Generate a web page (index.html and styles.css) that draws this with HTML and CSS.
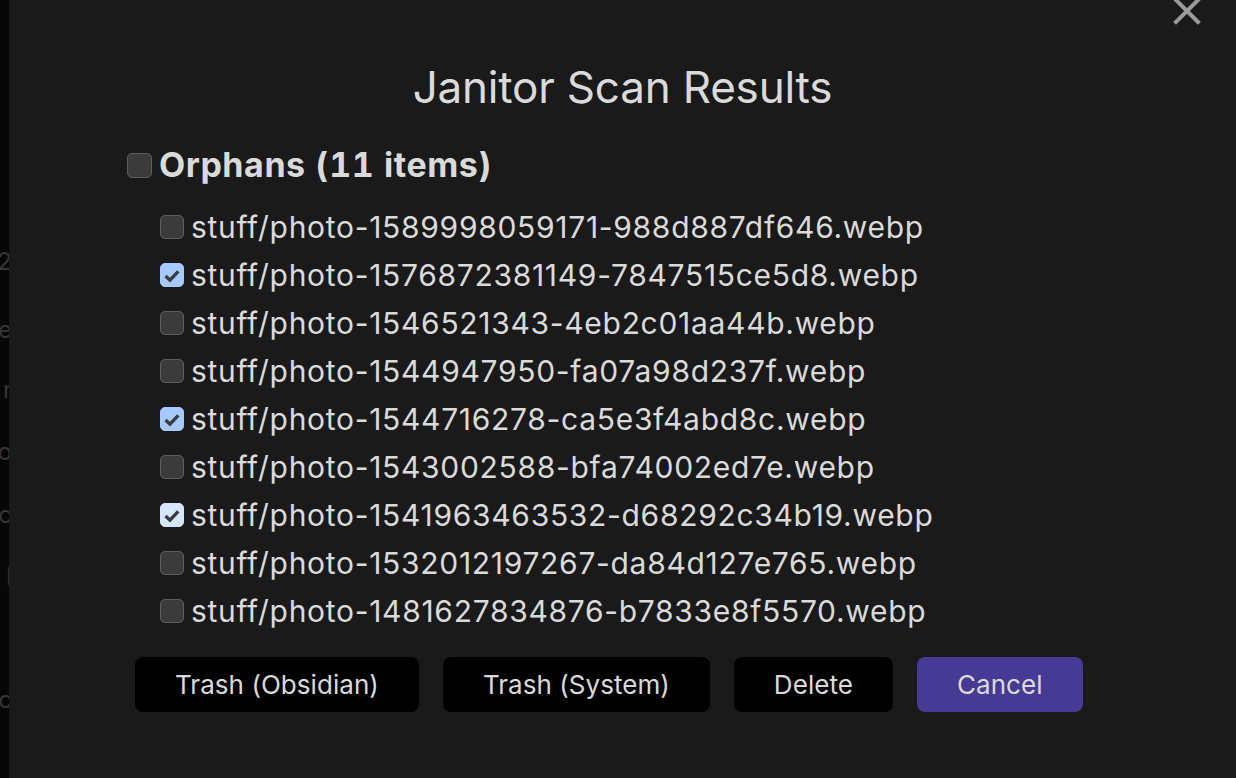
FILE: index.html
```html
<!DOCTYPE html>
<html>
<head>
<meta charset="utf-8">
<link rel="stylesheet" href="styles.css">
</head>
<body>
<div class="app">
  <div class="backdrop">
    <div class="bline l1"><span>2</span></div>
    <div class="bline l2"><span>e</span></div>
    <div class="bline l3"><span>r</span></div>
    <div class="bline l4"><span>o</span></div>
    <div class="bline l5"><span>c</span></div>
    <div class="bline l6"><span>l</span></div>
    <div class="bline l7"><span>c</span></div>
  </div>
  <div class="modal">
    <svg class="close" width="30" height="30" viewBox="0 0 30 30">
      <path d="M4 4 L26 26 M26 4 L4 26" stroke="#9a9a9a" stroke-width="4" stroke-linecap="square"/>
    </svg>
    <h1 class="title">Janitor Scan Results</h1>
    <div class="group">
      <label class="group-head"><span class="cb"></span>Orphans (11 items)</label>
      <ul class="items">
        <li><span class="cb"></span>stuff/photo-1589998059171-988d887df646.webp</li>
        <li><span class="cb on"><svg viewBox="0 0 24 24"><path d="M5 12.5 L9.8 17 L18.8 7.5"/></svg></span>stuff/photo-1576872381149-7847515ce5d8.webp</li>
        <li><span class="cb"></span>stuff/photo-1546521343-4eb2c01aa44b.webp</li>
        <li><span class="cb"></span>stuff/photo-1544947950-fa07a98d237f.webp</li>
        <li><span class="cb on"><svg viewBox="0 0 24 24"><path d="M5 12.5 L9.8 17 L18.8 7.5"/></svg></span>stuff/photo-1544716278-ca5e3f4abd8c.webp</li>
        <li><span class="cb"></span>stuff/photo-1543002588-bfa74002ed7e.webp</li>
        <li><span class="cb on focus"><svg viewBox="0 0 24 24"><path d="M5 12.5 L9.8 17 L18.8 7.5"/></svg></span>stuff/photo-1541963463532-d68292c34b19.webp</li>
        <li><span class="cb"></span>stuff/photo-1532012197267-da84d127e765.webp</li>
        <li><span class="cb"></span>stuff/photo-1481627834876-b7833e8f5570.webp</li>
      </ul>
    </div>
    <div class="buttons">
      <button class="btn b1">Trash (Obsidian)</button>
      <button class="btn b2">Trash (System)</button>
      <button class="btn b3">Delete</button>
      <button class="btn cta">Cancel</button>
    </div>
  </div>
</div>
</body>
</html>
```

FILE: styles.css
```css
html, body {
  margin: 0;
  padding: 0;
  background: #0a0a0a;
  overflow: hidden;
}
.app {
  display: flex;
  width: 1236px;
  height: 778px;
  font-family: Inter, "Liberation Sans", sans-serif;
}
.backdrop {
  width: 9px;
  flex: none;
  background: #070707;
  overflow: hidden;
  display: flex;
  flex-direction: column;
  padding-top: 247px;
}
.bline {
  display: flex;
  justify-content: flex-end;
  width: 8px;
  height: 30px;
  font-size: 24px;
  line-height: 30px;
  color: #363636;
  white-space: nowrap;
}
.bline span { margin-right: -4px; }
.bline.l2 { margin-top: 38px; }
.bline.l3 { margin-top: 30px; }
.bline.l4, .bline.l6 { margin-top: 32px; }
.bline.l5 { margin-top: 33px; }
.bline.l7 { margin-top: 93px; }
.modal {
  flex: 1;
  position: relative;
  background: #1a1a1a;
  display: flex;
  flex-direction: column;
  color: #dadada;
}
.close {
  position: absolute;
  top: -4px;
  left: 1163px;
}
.title {
  margin: 60px 0 0;
  font-size: 44px;
  font-weight: 400;
  line-height: 54px;
  text-align: center;
  color: #dadada;
  letter-spacing: -0.2px;
}
.group {
  margin: 31px 0 0 118px;
}
.group-head {
  display: flex;
  align-items: center;
  gap: 7px;
  height: 40px;
  font-size: 34px;
  font-weight: 700;
  line-height: 40px;
  letter-spacing: 0.55px;
  font-variant-numeric: tabular-nums;
}
.cb {
  flex: none;
  box-sizing: border-box;
  width: 24px;
  height: 24px;
  border: 1.5px solid #5e5e5e;
  border-radius: 5px;
  background: #3b3b3b;
  display: flex;
  align-items: center;
  justify-content: center;
}
.group-head .cb {
  width: 25px;
  height: 25px;
}
.cb.on {
  background: #a6c9ff;
  border-color: #a6c9ff;
}
.cb.on.focus {
  background: #d5e5ff;
  border-color: #d5e5ff;
}
.cb svg {
  width: 23px;
  height: 23px;
}
.cb path {
  fill: none;
  stroke: #3a3a3a;
  stroke-width: 3.6;
}
.items {
  list-style: none;
  margin: 18px 0 0;
  padding: 0 0 0 33px;
}
.items li {
  display: flex;
  align-items: center;
  gap: 7px;
  height: 48px;
  font-size: 30px;
  letter-spacing: 0.7px;
}
.buttons {
  display: flex;
  gap: 24px;
  margin: 22px 0 0 126px;
}
.btn {
  height: 55px;
  padding: 0 40px;
  border: none;
  border-radius: 8px;
  background: #000;
  color: #dadada;
  font-family: Inter, "Liberation Sans", sans-serif;
  font-size: 26px;
  letter-spacing: 0.05px;
}
.btn.cta {
  background: #473a94;
}
```
